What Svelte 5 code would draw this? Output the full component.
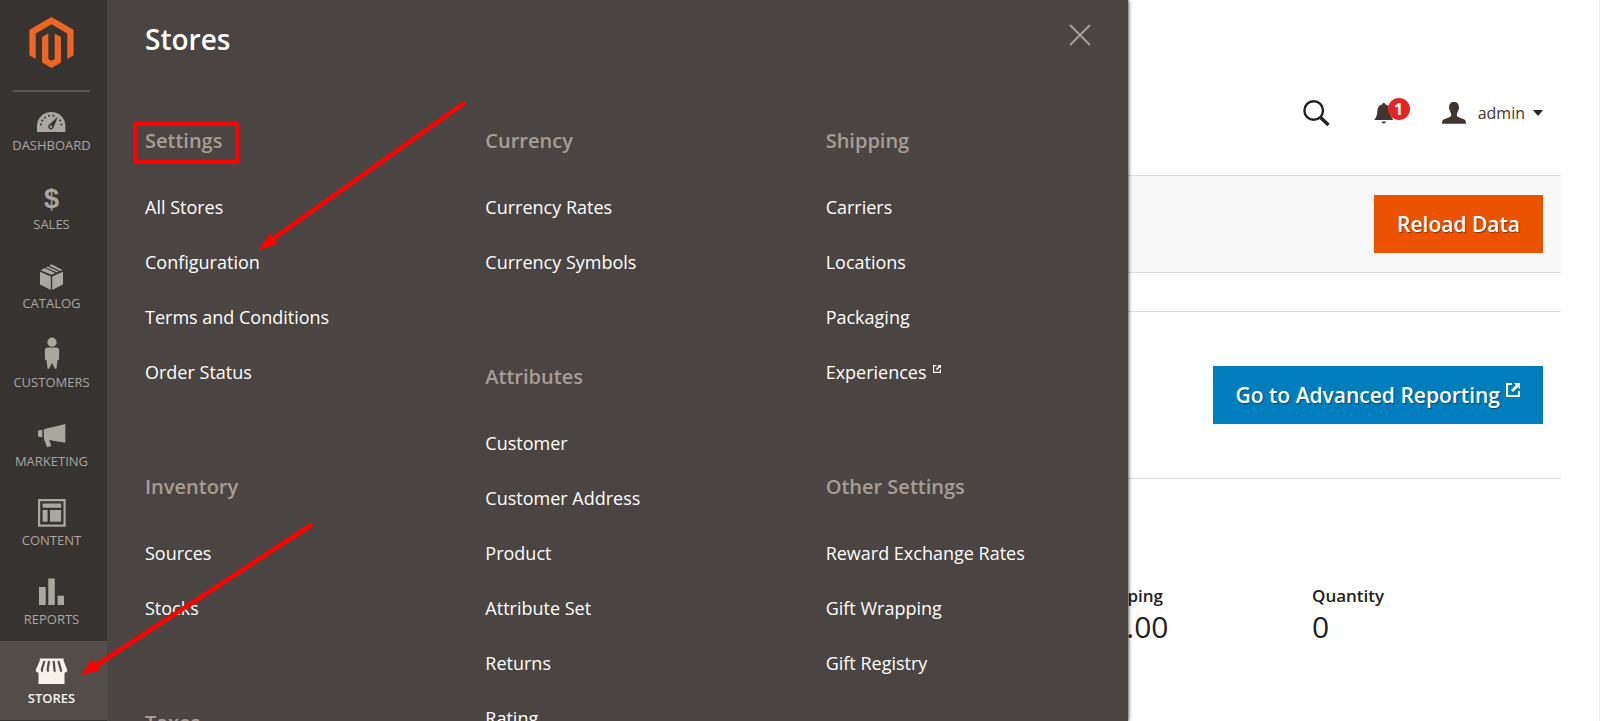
<script>
  const nav = [
    { id: 'dashboard', label: 'Dashboard' },
    { id: 'sales', label: 'Sales' },
    { id: 'catalog', label: 'Catalog' },
    { id: 'customers', label: 'Customers' },
    { id: 'marketing', label: 'Marketing' },
    { id: 'content', label: 'Content' },
    { id: 'reports', label: 'Reports' },
    { id: 'stores', label: 'Stores' }
  ];

  const columns = [
    [
      { title: 'Settings', links: ['All Stores', 'Configuration', 'Terms and Conditions', 'Order Status'] },
      { title: 'Inventory', links: ['Sources', 'Stocks'] },
      { title: 'Taxes', links: [] }
    ],
    [
      { title: 'Currency', links: ['Currency Rates', 'Currency Symbols'] },
      { title: 'Attributes', links: ['Customer', 'Customer Address', 'Product', 'Attribute Set', 'Returns', 'Rating'] }
    ],
    [
      { title: 'Shipping', links: ['Carriers', 'Locations', 'Packaging', 'Experiences'] },
      { title: 'Other Settings', links: ['Reward Exchange Rates', 'Gift Wrapping', 'Gift Registry'] }
    ]
  ];

  const totals = [
    { label: 'Shipping', value: '$0.00' },
    { label: 'Quantity', value: '0' }
  ];

  let active = $state('stores');
</script>

{#snippet external(size)}
  <svg class="external" width={size} height={size} viewBox="0 0 14 14" aria-hidden="true">
    <path d="M6 1H1v12h12V8" fill="none" stroke="currentColor" stroke-width="2" />
    <path d="M8 0h6v6l-2-2-5 5-2-2 5-5z" fill="currentColor" />
  </svg>
{/snippet}

<div class="app">
  <nav class="sidebar" aria-label="Main">
    <a class="logo" href="#home" aria-label="Home">
      <svg width="51" height="51" viewBox="0 0 24 24" aria-hidden="true">
        <path
          fill="#ef6524"
          d="M12 24l-4.455-2.572v-12l2.97-1.715v12.001l1.485.902 1.485-.902V7.713l2.971 1.715v12L12 24zM22.391 6.001v12l-2.969 1.714V7.713L12 3.43 4.574 7.713v12.002l-2.965-1.714v-12L12.008 0l10.383 6.001z"
        />
      </svg>
    </a>
    <ul>
      {#each nav as item}
        <li>
          <a href={'#' + item.id} class:active={active === item.id} onclick={() => (active = item.id)}>
            <svg width="41" height="32" viewBox="0 0 41 32" fill="currentColor" aria-hidden="true">
              {#if item.id === 'dashboard'}
                <path d="M6 28V22a14.2 14 0 0 1 28.400 0V28z" />
                <g class="cut">
                  <circle cx="10" cy="20.500" r="1" />
                  <circle cx="11.200" cy="16.500" r="1" />
                  <circle cx="14" cy="13.400" r="1" />
                  <circle cx="18" cy="11.700" r="1" />
                  <circle cx="22.400" cy="11.700" r="1" />
                  <circle cx="29.200" cy="16.500" r="1" />
                  <circle cx="30.400" cy="20.500" r="1" />
                  <path d="M27 12.500L18.300 20.500a2.700 2.700 0 1 0 4.200 3z" />
                </g>
                <circle cx="20" cy="22.700" r="1.200" />
              {:else if item.id === 'sales'}
                <text x="20.500" y="25" text-anchor="middle" class="dollar">$</text>
              {:else if item.id === 'catalog'}
                <path d="M9 9.700l10.800 4.700V28L9 22.500z M21.200 14.400L32 9.700v12.800L21.200 28z" />
                <path d="M9.600 8.200l4-2.100 10.600 4.900-3.700 1.800z M14.900 5.500l2-1.100 10.800 5-2 .900z M18.400 3.700L20.500 2.300l11 5.700-2.300 1.100z" />
              {:else if item.id === 'customers'}
                <circle cx="21" cy="1.200" r="4.600" />
                <path d="M17 6.600h8q3 0 3.200 3l-.2 9.400-1.600.3-.9 8.400h-1.600L21 21.700l-2.900 6h-1.600l-.9-8.400-1.600-.3-.2-9.400q.2-3 3.200-3z" />
              {:else if item.id === 'marketing'}
                <path d="M7 10.500l4.300-.8v7.600L7 16.600z M12.700 9.300L34.300 4v18.700L18.300 20l2 5.900-4.300 1.300-3-8.200z" />
              {:else if item.id === 'content'}
                <path fill-rule="evenodd" d="M7 0h27.700v27.700H7z M9.200 2.200v23.300h23.300V2.200z" />
                <path d="M11.600 4.500h18.500v4.300H11.600z M11.600 11h5v11.700h-5z M19 11h11.100v11.700H19z" />
              {:else if item.id === 'reports'}
                <path d="M8 9h6.700v18H8z M17.300.5h6.500V27h-6.500z M26.600 17.700H33V27h-6.400z" />
              {:else}
                <path d="M8.800 1.500h23.800v2.300l3.800 9.400q-.2 2.400-2.900 2.600V27H7.500V15.800q-2.700-.2-2.900-2.600l4.200-9.400z" />
                <g class="stripe">
                  <path d="M13.500 4l-2.700 8.300q0 1.800.9 2.400" />
                  <path d="M18 4l-1.300 8.300q0 1.800.9 2.400" />
                  <path d="M22.800 4l.6 8.300q.2 1.800.9 2.400" />
                  <path d="M27.400 4l2.300 8.300q.2 1.800.9 2.400" />
                </g>
              {/if}
            </svg>
            <span>{item.label}</span>
          </a>
        </li>
      {/each}
    </ul>
  </nav>

  <section class="panel" aria-label="Stores menu">
    <header>
      <h1>Stores</h1>
      <button class="close" type="button" aria-label="Close">
        <svg width="22" height="22" viewBox="0 0 22 22" aria-hidden="true">
          <path d="M1 1l20 20M21 1L1 21" fill="none" stroke="currentColor" stroke-width="2" />
        </svg>
      </button>
    </header>
    <div class="columns">
      {#each columns as groups}
        <div class="column">
          {#each groups as group}
            <section>
              <h2>{group.title}</h2>
              <ul>
                {#each group.links as link}
                  <li>
                    <a href="#link">{link}{#if link === 'Experiences'}{@render external(8)}{/if}</a>
                  </li>
                {/each}
              </ul>
            </section>
          {/each}
        </div>
      {/each}
    </div>
  </section>

  <main>
    <div class="tools">
      <button class="search" type="button" aria-label="Search">
        <svg width="27" height="26" viewBox="0 0 27 26" aria-hidden="true">
          <g fill="none" stroke="currentColor">
            <circle cx="10.700" cy="10.500" r="9.300" stroke-width="2.400" />
            <path d="M17 17l8.500 8" stroke-width="3.400" />
          </g>
        </svg>
      </button>
      <button class="bell" type="button" aria-label="Notifications">
        <svg width="20" height="22" viewBox="0 0 20 22" fill="currentColor" aria-hidden="true">
          <path d="M8.300 2.200a1.500 1.500 0 0 1 3 0c3.400.8 4.700 3.300 4.900 6.300.2 4.500 1 6.700 3.200 9.500H.2c2.200-2.800 3-5 3.200-9.500.2-3 1.500-5.500 4.900-6.300z M7.500 19.500h4.400q-.4 2-2.200 2t-2.200-2z" />
        </svg>
        <span class="badge">1</span>
      </button>
      <button class="account" type="button">
        <svg width="24" height="22" viewBox="0 0 24 22" fill="currentColor" aria-hidden="true">
          <path d="M12 0c3.400 0 4.900 2 4.800 5 .6.300.5 2-.4 2.800-.4 2-.9 2.700-1.500 3.600v2.300c.6 1.300 3.500 2 6.500 3.200 2.200.9 2.600 1.900 2.600 4.800H0c0-2.900.4-3.900 2.600-4.800 3-1.200 5.900-1.900 6.500-3.200v-2.300c-.6-.9-1.100-1.600-1.500-3.600-.9-.8-1-2.500-.4-2.800C7.100 2 8.600 0 12 0z" />
        </svg>
        <span>admin</span>
        <i class="caret"></i>
      </button>
    </div>

    <div class="actions">
      <button class="primary" type="button">Reload Data</button>
    </div>

    <div class="reporting">
      <a class="primary blue" href="#reporting">Go to Advanced Reporting{@render external(14)}</a>
    </div>

    <dl class="totals">
      {#each totals as total}
        <div>
          <dt>{total.label}</dt>
          <dd>{total.value}</dd>
        </div>
      {/each}
    </dl>
  </main>

  <svg class="marks" width="480" height="700" viewBox="0 0 480 700" aria-hidden="true">
    <g fill="none" stroke="#f00" stroke-width="4" stroke-linejoin="round" stroke-linecap="round">
      <rect x="135" y="124" width="102" height="38" />
      <path stroke-width="4.500" d="M463.500 103.500L272 239.500M310.500 525.500L96 665.500" />
    </g>
    <path fill="#f00" d="M257.500 250.500L270.500 233.500 277.500 243.800z M81 675.400L91.500 659.300 101 669.500z" />
  </svg>
</div>

<style>
  :global(body) {
    margin: 0;
    background: #fff;
  }

  .app {
    position: relative;
    display: flex;
    height: 100vh;
    overflow: hidden;
    font-family: 'Open Sans', 'Noto Sans', sans-serif;
    color: #41362f;
  }

  ul,
  dl,
  dd,
  h1,
  h2 {
    margin: 0;
    padding: 0;
    list-style: none;
  }

  a {
    color: inherit;
    text-decoration: none;
  }

  button {
    padding: 0;
    border: 0;
    background: none;
    color: inherit;
    font: inherit;
    cursor: pointer;
  }

  svg {
    display: block;
    flex: none;
    overflow: visible;
  }

  .sidebar {
    flex: none;
    width: 107px;
    background: #373330;
    color: #aaa6a0;
  }

  .logo {
    display: flex;
    justify-content: center;
    margin: 0 17px 0 13px;
    padding: 17px 0 22px;
    border-bottom: 2px solid #5f5552;
  }

  .sidebar ul {
    margin-top: -4px;
  }

  .sidebar li a {
    display: flex;
    flex-direction: column;
    align-items: center;
    padding: 16px 4px 13px 0;
    font-size: 13px;
    line-height: 18px;
    text-transform: uppercase;
  }

  .sidebar li a.active {
    background: #524d49;
    color: #f7f3eb;
    font-weight: 600;
  }

  .cut {
    fill: #373330;
  }

  .stripe {
    fill: none;
    stroke: #524d49;
    stroke-width: 2.2;
  }

  .dollar {
    font: bold 27px 'Liberation Sans', Arial, sans-serif;
  }

  .panel {
    position: absolute;
    z-index: 1;
    top: 0;
    bottom: 0;
    left: 107px;
    width: calc(64% - 3px);
    overflow: hidden;
    background: #4a4542;
    color: #fff;
    box-shadow: 0 0 4px #000;
    clip-path: inset(0 -8px 0 0);
  }

  .panel header {
    display: flex;
    justify-content: space-between;
    align-items: flex-start;
    padding: 20px 37px 0 38px;
  }

  h1 {
    font-size: 28px;
    font-weight: 600;
    line-height: 38px;
  }

  .close {
    margin-top: 4px;
    color: #a79d95;
  }

  .columns {
    display: grid;
    grid-template-columns: repeat(3, 1fr);
    margin-top: 69px;
  }

  .column {
    display: flex;
    flex-direction: column;
    gap: 73px;
    padding-left: 38px;
  }

  h2 {
    margin-bottom: 25px;
    color: #a79d95;
    font-size: 20px;
    font-weight: 600;
    line-height: 28px;
  }

  .column li {
    font-size: 18px;
    line-height: 55px;
  }

  .external {
    display: inline-block;
    margin-left: 6px;
    vertical-align: 6px;
  }

  main {
    flex: 1;
    padding-right: 38px;
    border-right: 1px solid #eee;
  }

  .tools {
    display: flex;
    justify-content: flex-end;
    align-items: center;
    height: 76px;
    padding: 75px 18px 24px 0;
  }

  .search {
    margin-right: 44px;
    color: #222;
  }

  .bell {
    position: relative;
    margin-right: 48px;
  }

  .badge {
    position: absolute;
    top: -4px;
    left: 14px;
    width: 22px;
    border-radius: 11px;
    background: #e22626;
    color: #fff;
    font-size: 16px;
    font-weight: 700;
    line-height: 22px;
    text-align: center;
  }

  .account {
    display: flex;
    align-items: center;
    font-size: 16px;
    line-height: 24px;
  }

  .account span {
    margin: 0 8px 0 12px;
  }

  .caret {
    border: 5px solid transparent;
    border-top: 6px solid #222;
    border-bottom: 0;
  }

  .actions {
    display: flex;
    justify-content: flex-end;
    padding: 19px 18px;
    border: solid #dedede;
    border-width: 1px 0;
    background: #f8f8f8;
  }

  .primary {
    padding: 0 23px;
    background: #eb5202;
    color: #fff;
    font-size: 21px;
    font-weight: 600;
    line-height: 58px;
    text-shadow: 1px 1px 1px rgba(0, 0, 0, 0.4);
  }

  .blue {
    background: #007dbd;
  }

  .reporting {
    display: flex;
    justify-content: flex-end;
    margin-top: 38px;
    padding: 54px 18px;
    border: solid #dedede;
    border-width: 1px 0;
  }

  .totals {
    display: flex;
    justify-content: flex-end;
    margin-top: 104px;
    padding-right: 29px;
    color: #222;
  }

  .totals div {
    width: 220px;
  }

  dt {
    font-size: 17px;
    font-weight: 600;
    line-height: 26px;
  }

  dd {
    font-size: 30px;
    line-height: 36px;
  }

  .marks {
    position: absolute;
    z-index: 2;
    top: 0;
    left: 0;
    pointer-events: none;
  }
</style>
